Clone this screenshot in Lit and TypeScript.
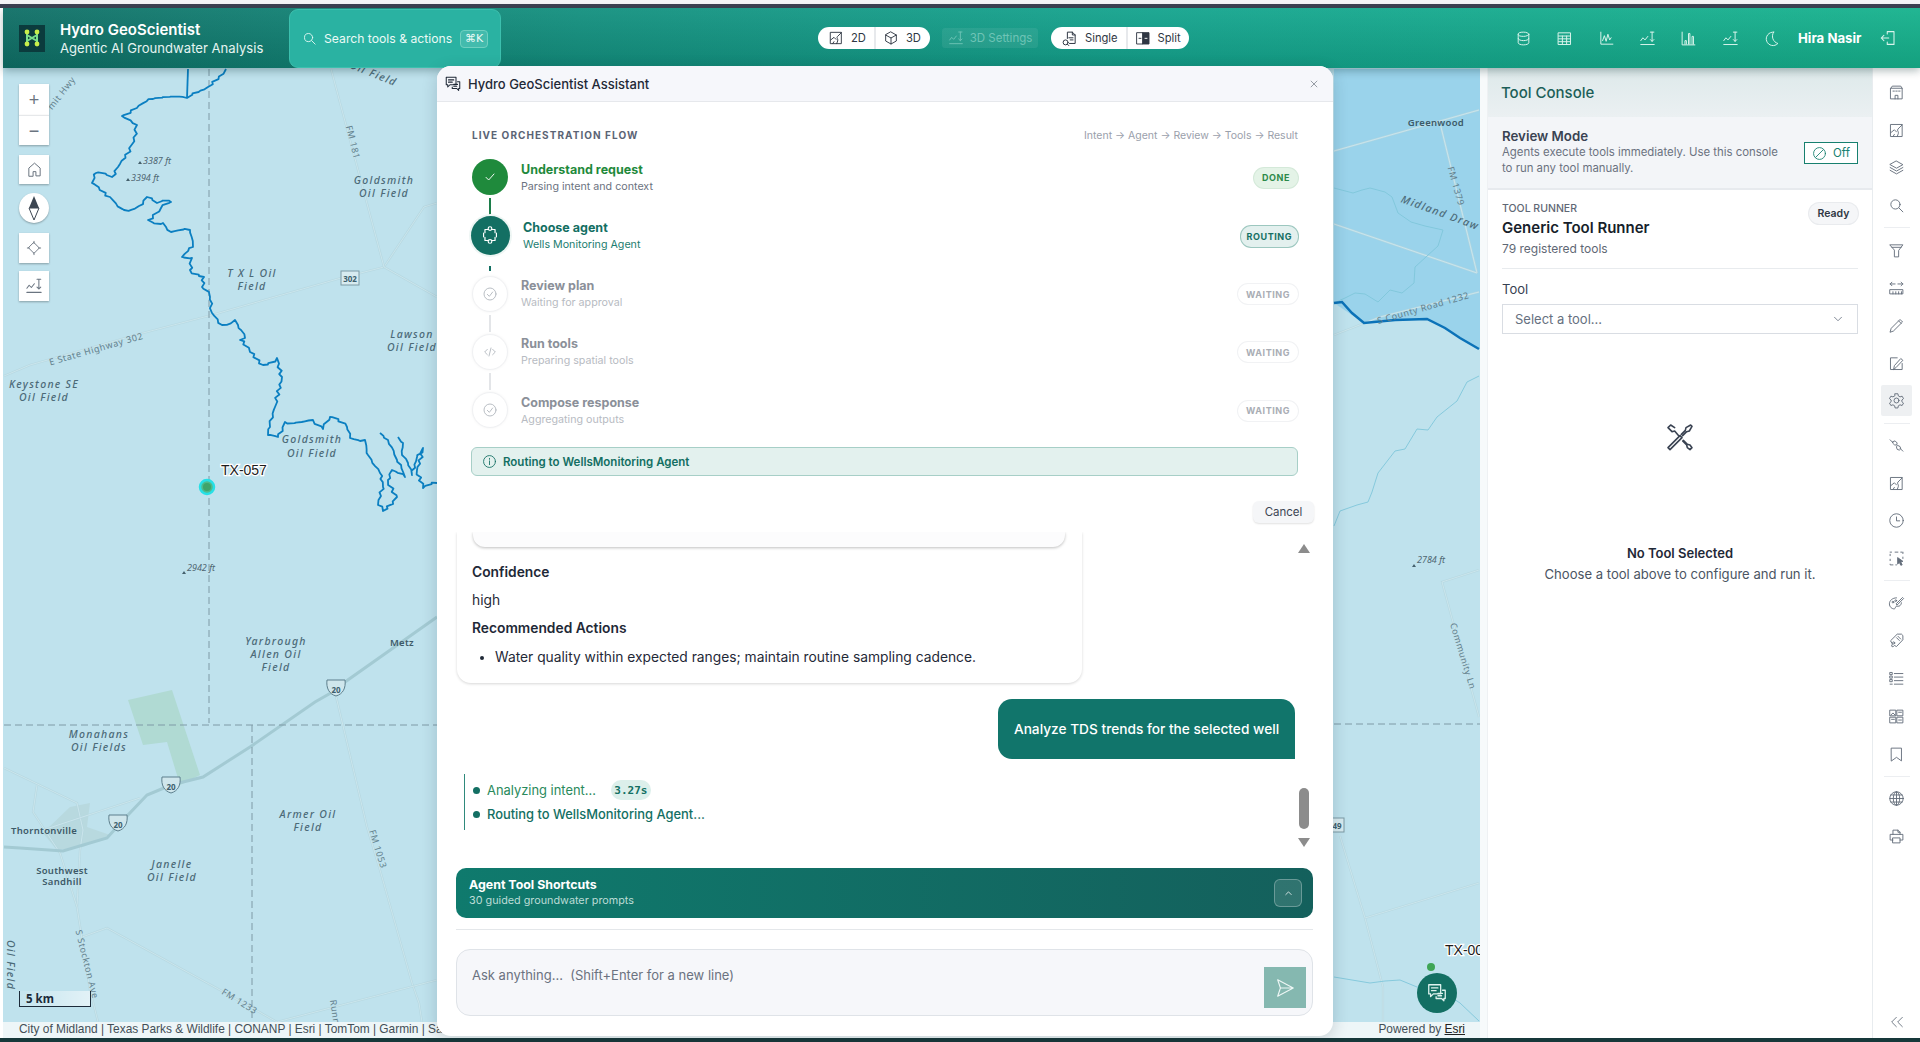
import { LitElement, html, css, svg, type TemplateResult } from "lit";
import { customElement } from "lit/decorators.js";

const paths: Record<string, TemplateResult> = {
  search: svg`<circle cx="10.5" cy="10.5" r="6.5"/><path d="M15.5 15.5 21 21"/>`,
  map: svg`<rect x="4" y="3.5" width="16" height="17"/><path d="M4 15l5-4 3 3M20 4l-6 6c-2 2 2 4 .5 6.5L13 20.5M7 20.5l2-3"/>`,
  cube: svg`<path d="M12 3l8 4.5v9L12 21l-8-4.500v-9zM4 7.500l8 4.500 8-4.500M12 12v9"/>`,
  elev: svg`<path d="M2.500 15l3-4 3 3 4-5M16 3h5M18.500 3v13M16 13.500l2.500 2.500 2.500-2.500M2.500 20.500h19"/>`,
  single: svg`<path d="M9 12V3h7l4 4v12h-8M16 3v4h4M11 11h6M13 14h4"/><circle cx="6.500" cy="17.500" r="3.500"/><path d="M9 20l2 2"/>`,
  split: svg`<rect x="3" y="4" width="9" height="17"/><rect x="12" y="4" width="9" height="17" fill="currentColor"/><path d="M6 12.500h3"/><path d="M15 12.500h3" stroke="#fff"/>`,
  db: svg`<ellipse cx="12" cy="6" rx="7.500" ry="3"/><path d="M4.500 6v12c0 1.700 3.400 3 7.500 3s7.500-1.300 7.500-3V6M4.500 12c0 1.700 3.400 3 7.500 3s7.500-1.300 7.500-3"/>`,
  table: svg`<rect x="3.500" y="4" width="17" height="16.500"/><path d="M3.500 8.500h17M3.500 12.500h17M3.500 16.500h17M9 8.500v12M15 8.500v12" />`,
  line: svg`<path d="M4 3v17h17M6.500 15l2.500-7 2.500 8 2.500-10 2.500 8 2-3"/>`,
  bars: svg`<path d="M3 3v18h18M7 20v-5h2v5M12 20V5h2v15M17 20V9h2v11"/>`,
  moon: svg`<path d="M15 3a9.500 9.500 0 1 0 6 16A10.500 10.500 0 0 1 15 3z"/>`,
  logout: svg`<path d="M11 3.500h9v17h-9v-3M11 6.500v-3M13 12H3M6.500 8.500 3 12l3.500 3.500"/>`,
  close: svg`<path d="M5 5l14 14M19 5 5 19"/>`,
  chat: svg`<path d="M3 3h13v10H8l-3 3v-3H3zM6 6.500h7M6 9.500h5"/><path d="M18 9h3v9h-1.500v2.500L17 18h-6v-2"/><path d="M13 12.500h5M13 15h4"/>`,
  check: svg`<path d="M6 12.500l4 4 8-9"/>`,
  checkc: svg`<circle cx="12" cy="12" r="9"/><path d="M8 12.500l3 3 5-6.500"/>`,
  agent: svg`<path d="M10 6H6.500v3.500M14 6h3.500v3.500M10 18H6.500v-3.500M14 18h3.500v-3.500M5 10v4M19 10v4"/><circle cx="12" cy="5" r="2"/><circle cx="12" cy="19" r="2"/>`,
  code: svg`<path d="M8 8l-4 4 4 4M16 8l4 4-4 4M13.500 6l-3 12"/>`,
  info: svg`<circle cx="12" cy="12" r="9.500"/><path d="M12 11v6M12 7v1.500"/>`,
  ban: svg`<circle cx="12" cy="12" r="9.500"/><path d="M6 18 18 6"/>`,
  down: svg`<path d="M6 9l6 6 6-6"/>`,
  up: svg`<path d="M7 14l5-5 5 5"/>`,
  send: svg`<path d="M4 3l17 9-17 9 3-9zM7 12h14"/>`,
  tools: svg`<path d="M3 20l1.500 1.500 9-9-1.500-1.500zM13 10l3-3 .5-2L20 3l1 1-2 3.500-2 .5-3 3M5 3l-2 2 3 3 2-.5L11 11M14 15l3 3 .5 2 2 1.500 1.500-1.500-1.500-2-2-.5-3-3M8 5 5 3"/>`,
  building: svg`<path d="M4 6h16v15H4zM4 6l2-3h12l2 3M7 10h2M11 10h2M15 10h2M10 21v-5h4v5"/>`,
  layers: svg`<path d="M12 3l9 5-9 5-9-5zM3 12l9 5 9-5M3 16l9 5 9-5"/>`,
  funnel: svg`<path d="M3 4h18l-6 8v9H9v-9zM5.500 7.500h13"/>`,
  ruler: svg`<path d="M3 15h18v6H3zM7 18v3M11 18v3M15 18v3M19 18v3M3 7h7M5.500 4.500 3 7l2.500 2.500M14 7h7M18.500 4.500 21 7l-2.500 2.500"/>`,
  pencil: svg`<path d="M3 21l1.500-5L17 3.500 20.500 7 8 19.500zM15 5.500 18.500 9"/>`,
  note: svg`<path d="M20 12v8.500H3.500V4H13M8 20l1-5 9-10 3 2.500-9.500 10z"/>`,
  gear: svg`<circle cx="12" cy="12" r="3.500"/><path d="M10 2.500h4l.6 3 2.400 1.400 2.900-1 2 3.400-2.300 2v2.400l2.300 2-2 3.400-2.900-1-2.400 1.400-.6 3h-4l-.6-3L7 18.100l-2.900 1-2-3.400 2.300-2v-2.400l-2.300-2 2-3.400 2.900 1 2.400-1.400z"/>`,
  link: svg`<path d="M3 4l4 4M21 20l-4-4M7 6.500l3-1 3 3-1 3-3-.5-2-2zM14 12l3 1.500 1 3-2 2-3-1-1-3z"/>`,
  clock: svg`<circle cx="12" cy="12" r="9.500"/><path d="M12 7v5.500h4.500"/>`,
  select: svg`<path d="M3 3h3M10 3h4M18 3h3v3M21 10v3M3 6v3M3 13v3M3 20v1h4M11 21h1" stroke-dasharray="2 1"/><path d="M14 11l7 5-3 1 2 4-2 .5-2-4-2 2z" fill="currentColor"/>`,
  palette: svg`<path d="M12 4C6 4 2 8 2 12.500s4 7.500 7 7c2-.5 1-3 2.500-3.500s4 .5 5.500-1c1.500-1.500 2-3.500 2-4"/><circle cx="7" cy="10" r="1.200"/><circle cx="11" cy="8" r="1.200"/><path d="M13 14 22 5l-1.500-1.500L12 12z"/>`,
  tag: svg`<path d="M4 12l9-9h6l2 2v6l-9 9.500-3-1.500-2 2-2-1 1-2.500z"/><circle cx="8" cy="15.500" r="1.500"/><path d="M12 8l4 4M14 6l4 4"/>`,
  list: svg`<path d="M9 5h12M9 10h12M9 15h12M9 20h12"/><rect x="3" y="3.500" width="3" height="3"/><rect x="3" y="8.500" width="3" height="3"/><rect x="3" y="13.500" width="3" height="3"/><path d="M3 20h3"/>`,
  qr: svg`<rect x="3" y="3" width="8" height="8"/><rect x="13" y="3" width="8" height="8"/><rect x="3" y="13" width="8" height="8"/><rect x="13" y="13" width="8" height="8"/><path d="M4 10l3-3 3 3M15 6h4M5 16h4M15 17h4"/>`,
  bookmark: svg`<path d="M5 3h14v18l-7-5-7 5z"/>`,
  globe: svg`<circle cx="12" cy="12" r="9.500"/><ellipse cx="12" cy="12" rx="4.500" ry="9.500"/><path d="M2.500 12h19M4 7h16M4 17h16M12 2.500v19"/>`,
  printer: svg`<path d="M7 9V3h7l3 3v3M14 3v3h3M7 17H3V9h18v8h-4M7 14h10v7H7z"/>`,
  chevs: svg`<path d="M11 5l-7 7 7 7M20 5l-7 7 7 7"/>`,
  home: svg`<path d="M4 21V10l8-7 8 7v11h-6v-6h-4v6z"/>`,
  target: svg`<path d="M12 4l8 8-8 8-8-8zM12 2v3M12 19v3M2 12h3M19 12h3"/>`,
};

const ic = (name: string, size = 18, sw = 1.4) =>
  html`<svg class="ic" width=${size} height=${size} viewBox="0 0 24 24" fill="none" stroke="currentColor" stroke-width=${sw} stroke-linejoin="round" stroke-linecap="round">${paths[name]}</svg>`;

type P = [number, number];
/** Adds small, repeatable side steps to a course so it reads as a natural river. */
const craggy = (pts: P[], amp = 1.8): string => {
  const out: string[] = [];
  pts.forEach((p, i) => {
    out.push(`${p[0]},${p[1]}`);
    const n = pts[i + 1];
    if (!n) return;
    const len = Math.hypot(n[0] - p[0], n[1] - p[1]);
    const parts = Math.max(1, Math.round(len / 4));
    for (let k = 1; k < parts; k++) {
      const t = k / parts;
      const s = Math.sin(i * 12.9 + k * 78.2) * amp;
      const c = Math.cos(i * 7.3 + k * 31.7) * amp;
      out.push(`${(p[0] + (n[0] - p[0]) * t + s).toFixed(1)},${(p[1] + (n[1] - p[1]) * t + c).toFixed(1)}`);
    }
  });
  return out.join(" ");
};

const riverA: P[] = [[226,69],[208,87],[187,98],[153,99],[122,116],[137,125],[133,143],[118,167],[112,177],[96,173],[92,183],[110,197],[124,210],[139,206],[147,197],[157,203],[171,202],[161,208],[148,220],[163,223],[171,232],[190,230],[193,247],[182,257],[192,258],[190,270],[204,277],[202,287],[210,297],[212,313],[222,325],[235,320],[241,330],[245,338],[240,340],[250,352],[263,365],[277,358],[282,377],[275,407],[270,427],[268,435],[278,437],[285,422],[313,420],[323,429],[330,417],[347,427],[350,438],[365,440],[368,455],[380,473],[383,487],[378,505],[383,511],[397,497],[388,480],[392,470],[405,477],[397,460],[388,440],[380,433]];
const riverB: P[] = [[398,437],[403,443],[402,455],[408,463],[412,475],[417,457],[423,448],[417,470],[423,488],[437,483]];

const roads = [
  "4,376 30,365 143,333 212,315 341,278 384,267 424,207 437,203",
  "331,69 384,267 437,297",
  "335,692 367,827 380,870 412,983 419,1003 422,1022",
  "277,1022 437,980",
  "82,937 107,928 220,990 277,1022",
  "77,907 90,990 98,1022",
  "4,768 77,803 83,830 80,850 77,907",
  "37,785 33,812 60,853 77,907",
  "43,830 140,798",
  "1334,151 1479,110",
  "1440,123 1477,273",
  "1334,224 1477,273",
  "1334,335 1380,317 1479,292",
  "1479,570 1442,582 1479,717",
  "1340,836 1365,918 1383,987 1383,1022",
  "1365,918 1479,883",
];
const streams = [
  "1334,188 1353,193 1362,190 1370,188 1385,192 1392,197 1398,213 1411,222 1425,226 1443,230 1438,246 1415,267 1414,283 1402,293 1390,290 1378,302 1365,294 1355,293 1345,298 1334,303",
  "1334,526 1340,511 1357,505 1368,502 1372,492 1378,473 1395,451 1405,449 1417,429 1428,430 1437,417 1457,401 1467,382 1479,376",
  "1334,977 1370,983 1385,981 1400,980 1417,987 1440,990 1460,1003 1479,1021",
];

type L = [number, number, string, string, number?];
const labels: L[] = [
  [384,184,"Goldsmith","f"],[384,197,"Oil Field","f"],
  [252,277,"T X L Oil","f"],[252,290,"Field","f"],
  [372,77,"Oil Field","f",22],
  [412,338,"Lawson","f"],[412,351,"Oil Field","f"],
  [44,388,"Keystone SE","f"],[44,401,"Oil Field","f"],
  [312,443,"Goldsmith","f"],[312,457,"Oil Field","f"],
  [276,645,"Yarbrough","f"],[276,658,"Allen Oil","f"],[276,671,"Field","f"],
  [99,738,"Monahans","f"],[99,751,"Oil Fields","f"],
  [172,868,"Janelle","f"],[172,881,"Oil Field","f"],
  [308,818,"Armer Oil","f"],[308,831,"Field","f"],
  [157,164,"3387 ft","e"],[145,181,"3394 ft","e"],[201,571,"2942 ft","e"],[1431,563,"2784 ft","e"],
  [44,834,"Thorntonville","t"],[62,874,"Southwest","t"],[62,885,"Sandhill","t"],[402,646,"Metz","t"],[1436,126,"Greenwood","t"],
  [350,143,"FM 181","r",76],[375,850,"FM 1053","r",73],[238,1004,"FM 1233","r",32],[84,965,"S Stockton Ave","r",76],
  [332,1014,"Runni","r",82],[1453,187,"FM 1379","r",74],[1424,311,"S County Road 1232","r",-16],[1460,657,"Community Ln","r",73],
  [64,95,"mit Hwy","r",-52],[97,352,"E State Highway 302","r",-16],
  [1439,216,"Midland Draw","f",20],[7,965,"Oil Field","f",90],
];

const shield = (x: number, y: number) => svg`<path d="M${x-9} ${y-8}h18c1 8-2 14-9 16-7-2-10-8-9-16z" fill="#cfe6ec" stroke="#5d7f8d" stroke-width="1"/><text class="sh" x=${x} y=${y+5}>20</text>`;

const mapSvg = svg`
  <rect x="3" y="68" width="1477" height="970" fill="#bfe2ed"/>
  <polygon points="1334,69 1480,69 1480,349 1460,338 1427,319 1364,323 1334,303" fill="#9ad3eb"/>
  <polygon points="128,700 172,690 200,775 180,785 167,742 143,745" fill="#b0dad3"/>
  <polygon points="43,833 70,807 90,803 87,827 110,835 83,847 57,850" fill="#b8d9df"/>
  ${roads.map((r) => svg`<polyline points=${r} fill="none" stroke="#b4d6df" stroke-opacity=".8" stroke-width="2.200"/><polyline points=${r} fill="none" stroke="#d0e8ef" stroke-opacity=".8" stroke-width="1"/>`)}
  ${streams.map((r) => svg`<polyline points=${r} fill="none" stroke="#7fc6da" stroke-width=".9"/>`)}
  <polyline points="4,847 20,848 63,851 107,838 128,815 147,795 171,785 203,777 250,747 315,702 336,690 345,682 437,617" fill="none" stroke="#a3cad3" stroke-width="3"/>
  <path d="M209 69V723M4 725H437M252 725V1022M1334 724H1480" fill="none" stroke="#7f9aa6" stroke-width="1" stroke-dasharray="7 4"/>
  <polyline points="188,69 187,98" fill="none" stroke="#0b7fc1" stroke-width="1.800"/>
  <polyline points=${craggy(riverA)} fill="none" stroke="#0b7fc1" stroke-width="1.800" stroke-linejoin="round"/>
  <polyline points=${craggy(riverB)} fill="none" stroke="#0b7fc1" stroke-width="1.800" stroke-linejoin="round"/>
  <polyline points="1334,303 1342,302 1352,313 1364,323 1395,320 1427,319 1445,328 1460,338 1479,349" fill="none" stroke="#0b72b8" stroke-width="2.500"/>
  ${shield(118, 823)}${shield(171, 785)}${shield(336, 688)}
  <rect x="341" y="271" width="18" height="14" fill="#d7ebf0" stroke="#7d9aa5"/><text class="sh" x="350" y="282">302</text>
  <rect x="1330" y="818" width="14" height="14" fill="#d7ebf0" stroke="#7d9aa5"/><text class="sh" x="1337" y="829">49</text>
  <path d="M140 161l2 3h-4zM128 178l2 3h-4zM184 571l2 3h-4zM1414 564l2 3h-4z" fill="#44606c"/>
  ${labels.map(([x, y, t, c, rot]) => svg`<text class=${c} x=${x} y=${y} transform=${rot ? `rotate(${rot} ${x} ${y})` : ""}>${t}</text>`)}
  <text class="well" x="221" y="475">TX-057</text>
  <circle cx="207" cy="487" r="7" fill="#4fb98c" stroke="#27e0e6" stroke-width="2.500"/>
  <circle cx="207" cy="487" r="4" fill="#3fa46a"/>
  <text class="well" x="1445" y="955">TX-00</text>
  <circle cx="1431" cy="967" r="4" fill="#3fa556"/>
`;

const steps = [
  { t: "Understand request", s: "Parsing intent and context", st: "done", b: "DONE", i: "check" },
  { t: "Choose agent", s: "Wells Monitoring Agent", st: "routing", b: "ROUTING", i: "agent" },
  { t: "Review plan", s: "Waiting for approval", st: "wait", b: "WAITING", i: "checkc" },
  { t: "Run tools", s: "Preparing spatial tools", st: "wait", b: "WAITING", i: "code" },
  { t: "Compose response", s: "Aggregating outputs", st: "wait", b: "WAITING", i: "checkc" },
];

const railGroups = [
  ["building", "map", "layers", "search"],
  ["funnel", "ruler", "pencil", "note", "gear"],
  ["link", "map", "clock", "select"],
  ["palette", "tag", "list", "qr", "bookmark"],
  ["globe", "printer"],
];

@customElement("app-root")
export class AppRoot extends LitElement {
  static styles = css`
    :host { display: block; width: 1920px; height: 1042px; position: relative; overflow: hidden; background: #fff; font-family: Inter, "Noto Sans", sans-serif; color: #1f2937; }
    * { box-sizing: border-box; }
    .ic { display: block; flex: none; }
    .strip-top { height: 8px; border-top: 4px solid #f4f4f6; background: #3d4152; }
    .frame { height: 1030px; padding-left: 3px; display: flex; flex-direction: column; }
    .strip-bottom { height: 4px; background: #17383a; }

    header { height: 60px; flex: none; display: flex; align-items: center; padding-left: 16px; position: relative; z-index: 3; color: #fff;
      background: linear-gradient(180deg, rgba(255,255,255,.05), rgba(0,0,0,.1)), linear-gradient(90deg, #0f6f66 0%, #13907f 30%, #14a48e 60%, #16b28d 100%); box-shadow: 0 3px 8px rgba(0,40,40,.3); }
    .logo { width: 26px; height: 27px; background: #0b3b3d; display: grid; place-items: center; flex: none; }
    .brand { width: 229px; margin-left: 15px; flex: none; }
    .brand b { display: block; font-size: 15px; font-weight: 600; line-height: 19px; }
    .brand span { display: block; font-size: 13.100px; line-height: 18px; color: #e5f4f1; white-space: nowrap; }
    .search { width: 212px; height: 59px; margin-top: 1px; flex: none; display: flex; align-items: center; padding: 0 12px; border-radius: 9px; background: #2ab2a2; border: 1px solid #3cc0ae; font-size: 12.200px; color: #eafaf6; white-space: nowrap; }
    .search .txt { margin-left: 7px; }
    .kbd { margin-left: 8px; width: 29px; height: 18px; border: 1px solid #6fd0c0; border-radius: 4px; display: grid; place-items: center; font-size: 11px; font-family: "DejaVu Sans", sans-serif; background: rgba(255,255,255,.12); }
    .pill { height: 22px; background: #fff; border-radius: 11px; display: flex; align-items: center; color: #2f3743; font-size: 11.200px; flex: none; overflow: hidden; }
    .pill .opt { display: flex; align-items: center; gap: 7px; padding: 0 8px; height: 100%; white-space: nowrap; }
    .pill .opt + .opt { border-left: 2px solid #e7e9ec; padding-left: 7px; }
    .p1 { margin-left: 317px; width: 112px; padding-left: 2px; }
    .s3d { margin-left: 12px; width: 96px; height: 20px; display: flex; align-items: center; justify-content: center; gap: 6px; background: rgba(255,255,255,.07); color: #6fc4b6; font-size: 11.500px; flex: none; border-radius: 3px; }
    .p2 { margin-left: 13px; width: 138px; padding-left: 2px; }
    .acts { margin-left: auto; display: flex; align-items: center; padding-right: 23px; }
    .acts .cell { width: 41.300px; display: grid; place-items: center; color: #d9f4ec; }
    .user { margin-left: 6px; font-size: 13.200px; font-weight: 700; width: 64px; white-space: nowrap; }
    .out { margin-left: 17px; color: #d9f4ec; }

    main { flex: 1; display: flex; min-height: 0; position: relative; }
    .map { width: 1477px; position: relative; flex: none; overflow: hidden; }
    .map > svg.canvas { display: block; width: 1477px; height: 970px; }
    .canvas text { text-anchor: middle; }
    .canvas .f { font: italic 500 10.500px "Noto Sans", sans-serif; letter-spacing: 1.300px; fill: #4c6a78; }
    .canvas .e { font: italic 9px "Noto Sans", sans-serif; fill: #4f6672; }
    .canvas .t { font: 600 9.500px "Noto Sans", sans-serif; letter-spacing: .3px; fill: #3d5a68; }
    .canvas .r { font: 9px "Noto Sans", sans-serif; letter-spacing: .6px; fill: #62808c; }
    .canvas .sh { font: 700 8px "Noto Sans", sans-serif; fill: #3d5f6e; }
    .canvas .well { text-anchor: start; font: 14px "Liberation Sans", sans-serif; fill: #1c1c1c; stroke: #fff; stroke-width: 2.500px; paint-order: stroke; }
    .ctrl { position: absolute; left: 16px; width: 30px; background: #fff; display: grid; place-items: center; color: #6a7480; box-shadow: 0 1px 2px rgba(0,0,0,.3); }
    .ctrl span { font: 18px/1 "Liberation Sans", sans-serif; }
    .c1 { top: 16px; height: 31px; }
    .c2 { top: 47px; height: 30px; border-top: 1px solid #e6e8ea; }
    .c3 { top: 87px; height: 29px; }
    .c4 { top: 125px; height: 30px; border-radius: 50%; }
    .c5 { top: 165px; height: 30px; }
    .c6 { top: 203px; height: 30px; }
    .scale { position: absolute; left: 16px; top: 923px; width: 72px; height: 16px; border: 1px solid #1c2b3a; border-top: 0; background: linear-gradient(90deg, rgba(255,255,255,.1), rgba(255,255,255,.55)); font: 700 11.500px "Noto Sans", sans-serif; padding-left: 6px; line-height: 15px; color: #1c2b3a; }
    .attr { position: absolute; left: 0; right: 0; bottom: 0; height: 16px; background: #eef6f8; font: 11.900px/14px "Liberation Sans", sans-serif; color: #444f57; padding-left: 16px; white-space: nowrap; }
    .attr .pw { position: absolute; right: 15px; top: 0; }
    .attr u { color: #222; }
    .fab { position: absolute; left: 1414px; top: 905px; width: 40px; height: 40px; border-radius: 50%; background: #136f63; color: #dff3ef; display: grid; place-items: center; }

    .split { width: 8px; background: #f7fafb; flex: none; border-right: 1px solid #eef1f3; }
    .panel { width: 385px; flex: none; display: flex; flex-direction: column; background: #fff; border-right: 1px solid #e8ecef; }
    .ph { height: 49px; background: linear-gradient(180deg, #dde9ea, #ebf0f2); display: flex; align-items: center; padding: 0 0 1px 13px; font-size: 15px; font-weight: 500; color: #1c5f58; }
    .rv { height: 73px; background: #f3f5f8; border-bottom: 2px solid #e7eaee; padding: 12px 14px 0 14px; display: flex; align-items: flex-start; justify-content: space-between; }
    .rv b { display: block; font-size: 13.300px; font-weight: 600; line-height: 15px; color: #3a4352; }
    .rv p { margin: 0; font-size: 11.400px; line-height: 16px; color: #6b7280; width: 300px; white-space: nowrap; }
    .off { width: 54px; height: 22px; margin-top: 13px; border: 1.500px solid #17806f; display: flex; align-items: center; justify-content: center; gap: 6px; font-size: 11.500px; color: #17806f; background: #fff; }
    .runner { padding: 11px 14px 0 14px; flex: 1; display: flex; flex-direction: column; }
    .rtop { display: flex; justify-content: space-between; align-items: flex-start; }
    .rk { font-size: 10.500px; font-weight: 500; line-height: 16px; color: #5f6875; }
    .ready { width: 49px; height: 21px; margin-top: 2px; border-radius: 11px; background: #f5f6f8; box-shadow: 0 0 0 1px #e9ebee; display: grid; place-items: center; font-size: 10.500px; font-weight: 600; color: #2f3743; }
    .rt { font-size: 15px; font-weight: 600; line-height: 20px; margin-top: -6px; color: #171f2b; }
    .rc { font-size: 12px; line-height: 16px; margin-top: 3px; color: #5f6875; }
    .hr { height: 1px; background: #e8ebee; margin-top: 11px; }
    .fl { font-size: 13px; line-height: 18px; margin-top: 11px; color: #374151; }
    .sel { height: 30px; margin-top: 6px; border: 1px solid #d9dde3; display: flex; align-items: center; justify-content: space-between; padding: 0 12px; font-size: 13px; color: #667080; }
    .empty { display: flex; flex-direction: column; align-items: center; margin-top: 87px; color: #3a4352; }
    .empty b { margin-top: 91px; font-size: 13px; font-weight: 600; line-height: 18px; color: #1f2937; }
    .empty span { margin-top: 3px; font-size: 13.100px; line-height: 18px; color: #4b5563; white-space: nowrap; }

    .rail { flex: 1; display: flex; flex-direction: column; align-items: center; padding-top: 5.500px; color: #636d7a; }
    .rb { width: 31px; height: 37.700px; flex: none; display: grid; place-items: center; }
    .rb.on { background: #eef0f2; height: 31px; margin: 3.350px 0; border-radius: 2px; }
    .rsep { width: 26px; height: 7px; flex: none; }
    .rsep::after { content: ""; display: block; height: 1px; background: #eceef1; margin-top: 3px; }
    .rail .end { margin-top: auto; margin-bottom: 8px; color: #6b7480; }

    .dlg { position: absolute; left: 434px; top: -2px; width: 896px; height: 970px; background: #fff; border-radius: 14px; z-index: 4; display: flex; flex-direction: column; box-shadow: 0 4px 16px rgba(20,40,50,.18); overflow: hidden; }
    .dh { height: 36px; flex: none; background: #f6f7fb; border-bottom: 1px solid #e6e8ec; display: flex; align-items: center; padding: 0 14px 0 7px; font-size: 13px; font-weight: 500; color: #1f2937; }
    .dh .ttl { margin-left: 6px; flex: 1; }
    .dh .ic:last-child { color: #525b68; }
    .flow { padding: 26px 35px 0 34px; flex: none; }
    .fh { display: flex; justify-content: space-between; align-items: center; height: 14px; }
    .fh b { font-size: 10px; font-weight: 700; letter-spacing: 1.050px; color: #5b6475; margin-left: 1px; }
    .fh span { font-size: 10.500px; color: #9aa0ab; }
    .steps { margin-top: 17px; }
    .row { display: flex; height: 58.250px; }
    .row:last-child { height: 36px; }
    .mk { width: 38px; flex: none; display: flex; flex-direction: column; align-items: center; }
    .circ { width: 36px; height: 36px; flex: none; border-radius: 50%; display: grid; place-items: center; }
    .conn { width: 2px; flex: none; margin-top: 3px; height: 17px; }
    .row.done .circ { background: #1f8a3c; color: #fff; }
    .row.done .conn { background: #1c7d4a; }
    .row.routing .circ { width: 39px; height: 39px; margin-top: -1.500px; background: #136f63; color: #fff; box-shadow: 0 0 0 2px #eef6f4; }
    .row.routing .conn { background: #136f63; height: 5px; margin-top: 11px; }
    .row.wait .circ { background: #fff; border: 1px solid #f0f1f3; color: #b4b9c0; box-shadow: 0 0 3px rgba(0,0,0,.05); }
    .row.wait .conn { background: #e3e5e8; }
    .rm { flex: 1; height: 37px; margin-left: 12px; display: flex; align-items: center; justify-content: space-between; }
    .rm .a { font-size: 12.500px; font-weight: 700; line-height: 17px; }
    .rm .z { font-size: 10.700px; line-height: 17px; }
    .row.done .a { color: #1f8a3c; } .row.done .z { color: #6b7280; }
    .row.routing .rm { margin-left: 14px; padding-top: 1px; } .row.routing .a { color: #136f63; } .row.routing .z { color: #1c7d6f; }
    .row.wait .a { color: #8b9099; } .row.wait .z { color: #b7bbc2; }
    .bd { height: 20px; padding: 0 8px; border-radius: 10px; display: grid; place-items: center; font-size: 9px; font-weight: 700; letter-spacing: .55px; }
    .row.done .bd { background: #e4f3e7; color: #2d8a4a; box-shadow: 0 0 0 1px #d4e9d9; }
    .row.routing .bd { height: 21px; padding: 0 6px; background: #e3f0ee; color: #136f63; box-shadow: 0 0 0 1px #9cc7bf; }
    .row.wait .bd { color: #a9adb4; box-shadow: 0 0 0 1px #f1f2f4; }
    .note { margin-top: 19px; height: 29px; border-radius: 6px; background: #e3f1ee; border: 1px solid #a7cfc7; display: flex; align-items: center; gap: 6px; padding-left: 10px; font-size: 11.500px; font-weight: 600; color: #136f63; }
    .crow { display: flex; justify-content: flex-end; padding-right: 19px; margin-top: 25px; flex: none; }
    .cancel { width: 61px; height: 22px; border-radius: 6px; background: #f5f6f8; box-shadow: 0 1px 2px rgba(0,0,0,.12); display: grid; place-items: center; font-size: 11.500px; color: #3d4654; }
    .msgs { height: 336px; flex: none; margin-top: 9px; padding-left: 20px; position: relative; overflow: hidden; display: flex; flex-direction: column; }
    .card { width: 625px; height: 151px; flex: none; border-radius: 0 0 14px 14px; box-shadow: 0 1px 3px rgba(0,0,0,.16); padding: 0 15px; font-size: 13.800px; line-height: 23px; color: #1f2937; white-space: nowrap; }
    .part { height: 15px; width: 592px; margin-left: 1px; border-radius: 0 0 12px 12px; box-shadow: 0 1px 3px rgba(0,0,0,.25); background: #fcfcfd; }
    .card b { display: block; font-weight: 600; margin-top: 5px; }
    .card b.first { margin-top: 14px; }
    .card .pl { margin-top: 5px; }
    .card ul { margin: 6px 0 0; padding-left: 23px; }
    .bubble { align-self: flex-end; margin: 16px 38px 0 0; width: 297px; height: 60px; flex: none; background: #11756b; border-radius: 14px 14px 0 14px; color: #fff; font-size: 13.700px; font-weight: 500; display: grid; place-items: center; white-space: nowrap; }
    .stat { margin: 15px 0 0 7px; height: 56px; border-left: 1.500px solid #2f8a7c; padding-left: 8px; font-size: 12.900px; flex: none; }
    .sr { height: 24px; display: flex; align-items: center; margin-top: 4px; color: #2a8a5c; }
    .sr + .sr { margin-top: 0; color: #136f63; font-weight: 500; }
    .dot { width: 7px; height: 7px; border-radius: 50%; background: #136f63; margin-right: 7px; flex: none; }
    .chip { margin-left: 15px; width: 40px; height: 20px; border-radius: 10px; background: #dcefeb; color: #136f63; display: grid; place-items: center; font: 700 11px "DejaVu Sans Mono", monospace; }
    .sb { position: absolute; right: 22px; top: 12px; height: 303px; width: 14px; }
    .tri-u, .tri-d { position: absolute; left: 1px; width: 0; height: 0; border-left: 6px solid transparent; border-right: 6px solid transparent; }
    .tri-u { top: 0; border-bottom: 9px solid #8c8c8c; }
    .tri-d { bottom: 0; border-top: 9px solid #8c8c8c; }
    .thumb { position: absolute; left: 2px; width: 10px; top: 244px; height: 41px; border-radius: 5px; background: #8c8c8c; }
    .sc { margin: 0 20px 0 19px; height: 50px; flex: none; border-radius: 10px; background: linear-gradient(90deg, #0f7a6d, #14605c); color: #fff; display: flex; align-items: center; justify-content: space-between; padding: 0 11px 0 13px; }
    .sc b { display: block; font-size: 12.400px; font-weight: 700; line-height: 16px; }
    .sc span { display: block; font-size: 10.800px; line-height: 16px; color: #bcdcd6; }
    .sb2 { width: 28px; height: 28px; border-radius: 6px; background: rgba(255,255,255,.12); border: 1px solid rgba(255,255,255,.28); display: grid; place-items: center; }
    .dv { height: 1px; margin: 11px 20px 0 19px; background: #e4e7ea; flex: none; }
    .inp { margin: 19px 20px 0 19px; height: 67px; flex: none; border-radius: 14px; background: #f6f7fa; border: 1px solid #dfe3e8; padding: 17px 6px 0 15px; display: flex; justify-content: space-between; align-items: flex-start; font-size: 13px; line-height: 16px; color: #6b7280; }
    .send { width: 42px; height: 41px; background: #85b8b0; display: grid; place-items: center; color: #eef7f5; }
  `;

  render() {
    return html`
      <div class="strip-top"></div>
      <div class="frame">
        <header>
          <div class="logo">
            <svg width="18" height="20" viewBox="0 0 18 20" fill="none"><path d="M4 4v12M14 4v12M4 7l10 6M14 7 4 13" stroke="#7be08c" stroke-width="2"/><circle cx="4" cy="4" r="2.400" fill="#c9ee4a"/><circle cx="14" cy="4" r="2.400" fill="#c9ee4a"/><circle cx="4" cy="16" r="2.400" fill="#c9ee4a"/><circle cx="14" cy="16" r="2.400" fill="#c9ee4a"/></svg>
          </div>
          <div class="brand"><b>Hydro GeoScientist</b><span>Agentic AI Groundwater Analysis</span></div>
          <div class="search">${ic("search", 15)}<span class="txt">Search tools &amp; actions</span><span class="kbd">⌘K</span></div>
          <div class="pill p1"><span class="opt">${ic("map", 16)}2D</span><span class="opt">${ic("cube", 16)}3D</span></div>
          <div class="s3d">${ic("elev", 16)}3D Settings</div>
          <div class="pill p2"><span class="opt">${ic("single", 17)}Single</span><span class="opt">${ic("split", 16)}Split</span></div>
          <div class="acts">
            ${["db", "table", "line", "elev", "bars", "elev", "moon"].map((n) => html`<span class="cell">${ic(n, 17)}</span>`)}
            <span class="user">Hira Nasir</span>
            <span class="out">${ic("logout", 18)}</span>
          </div>
        </header>
        <main>
          <div class="map">
            <svg class="canvas" viewBox="3 68 1477 970">${mapSvg}</svg>
            <div class="ctrl c1"><span>+</span></div>
            <div class="ctrl c2"><span>−</span></div>
            <div class="ctrl c3">${ic("home", 17)}</div>
            <div class="ctrl c4">
              <svg width="12" height="24" viewBox="0 0 12 24"><path d="M6 0l5 12H1z" fill="#3c4652"/><path d="M6 24l5-12H1z" fill="#fff" stroke="#3c4652"/></svg>
            </div>
            <div class="ctrl c5">${ic("target", 16)}</div>
            <div class="ctrl c6">${ic("elev", 18)}</div>
            <div class="scale">5 km</div>
            <div class="attr">City of Midland | Texas Parks &amp; Wildlife | CONANP | Esri | TomTom | Garmin | Sa<span class="pw">Powered by <u>Esri</u></span></div>
            <div class="fab">${ic("chat", 22)}</div>
          </div>
          <div class="split"></div>
          <div class="panel">
            <div class="ph">Tool Console</div>
            <div class="rv">
              <div><b>Review Mode</b><p>Agents execute tools immediately. Use this console<br />to run any tool manually.</p></div>
              <div class="off">${ic("ban", 15)}Off</div>
            </div>
            <div class="runner">
              <div class="rtop"><span class="rk">TOOL RUNNER</span><span class="ready">Ready</span></div>
              <div class="rt">Generic Tool Runner</div>
              <div class="rc">79 registered tools</div>
              <div class="hr"></div>
              <div class="fl">Tool</div>
              <div class="sel">Select a tool...${ic("down", 14)}</div>
              <div class="empty">
                ${ic("tools", 32, 1.2)}
                <b>No Tool Selected</b>
                <span>Choose a tool above to configure and run it.</span>
              </div>
            </div>
          </div>
          <div class="rail">
            ${railGroups.map((g, gi) => html`
              ${gi ? html`<div class="rsep"></div>` : ""}
              ${g.map((n) => html`<div class="rb ${n === "gear" ? "on" : ""}">${ic(n, 17, 1.3)}</div>`)}
            `)}
            <div class="end">${ic("chevs", 16)}</div>
          </div>
          <section class="dlg">
            <div class="dh">${ic("chat", 18)}<span class="ttl">Hydro GeoScientist Assistant</span>${ic("close", 10)}</div>
            <div class="flow">
              <div class="fh"><b>LIVE ORCHESTRATION FLOW</b><span>Intent → Agent → Review → Tools → Result</span></div>
              <div class="steps">
                ${steps.map((s, i) => html`
                  <div class="row ${s.st}">
                    <div class="mk">
                      <div class="circ">${ic(s.i, s.st === "routing" ? 22 : 16, s.st === "routing" ? 1.3 : 1.4)}</div>
                      ${i < steps.length - 1 ? html`<div class="conn"></div>` : ""}
                    </div>
                    <div class="rm">
                      <div><div class="a">${s.t}</div><div class="z">${s.s}</div></div>
                      <div class="bd">${s.b}</div>
                    </div>
                  </div>`)}
              </div>
              <div class="note">${ic("info", 15)}Routing to WellsMonitoring Agent</div>
            </div>
            <div class="crow"><div class="cancel">Cancel</div></div>
            <div class="msgs">
              <div class="card">
                <div class="part"></div>
                <b class="first">Confidence</b>
                <div class="pl">high</div>
                <b>Recommended Actions</b>
                <ul><li>Water quality within expected ranges; maintain routine sampling cadence.</li></ul>
              </div>
              <div class="bubble">Analyze TDS trends for the selected well</div>
              <div class="stat">
                <div class="sr"><span class="dot"></span>Analyzing intent...<span class="chip">3.27s</span></div>
                <div class="sr"><span class="dot"></span>Routing to WellsMonitoring Agent...</div>
              </div>
              <div class="sb"><div class="tri-u"></div><div class="thumb"></div><div class="tri-d"></div></div>
            </div>
            <div class="sc">
              <div><b>Agent Tool Shortcuts</b><span>30 guided groundwater prompts</span></div>
              <div class="sb2">${ic("up", 13)}</div>
            </div>
            <div class="dv"></div>
            <div class="inp"><span>Ask anything...&nbsp; (Shift+Enter for a new line)</span><div class="send">${ic("send", 22, 1.2)}</div></div>
          </section>
        </main>
      </div>
      <div class="strip-bottom"></div>
    `;
  }
}
